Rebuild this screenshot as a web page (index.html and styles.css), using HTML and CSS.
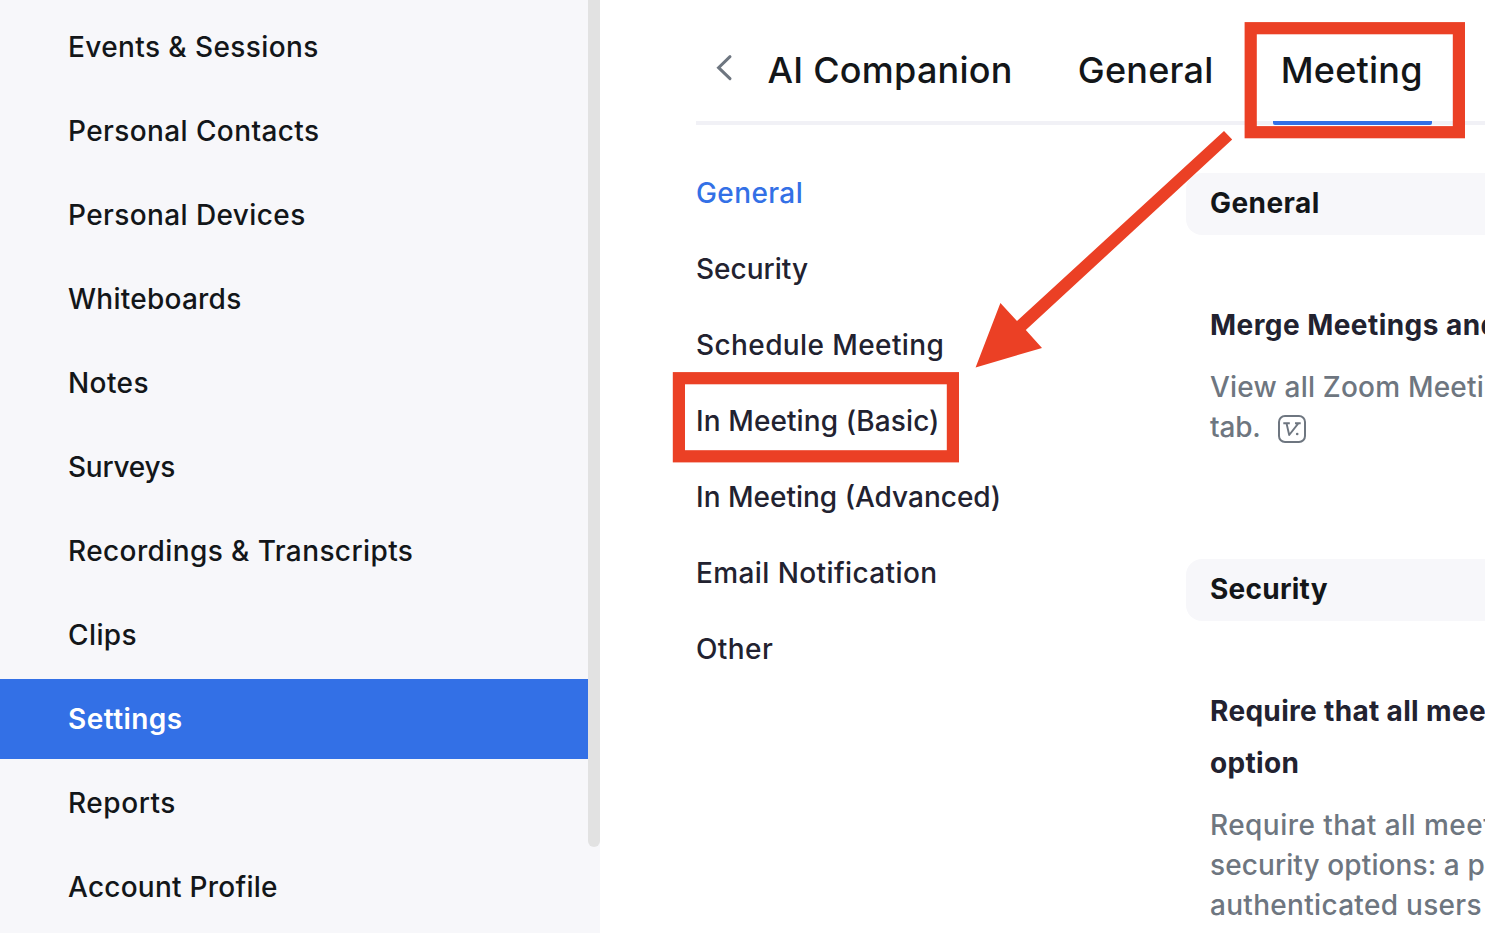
FILE: index.html
```html
<!DOCTYPE html>
<html lang="en">
<head>
<meta charset="utf-8">
<title>Settings</title>
<link rel="stylesheet" href="styles.css">
</head>
<body>
<div class="app">
  <aside class="sidebar">
    <nav class="menu">
      <a class="item">Events &amp; Sessions</a>
      <a class="item">Personal Contacts</a>
      <a class="item">Personal Devices</a>
      <a class="item snug">Whiteboards</a>
      <a class="item">Notes</a>
      <a class="item tight">Surveys</a>
      <a class="item">Recordings &amp; Transcripts</a>
      <a class="item">Clips</a>
      <a class="item active">Settings</a>
      <a class="item loose">Reports</a>
      <a class="item snug">Account Profile</a>
    </nav>
    <div class="scrollbar"></div>
  </aside>
  <main class="main">
    <header class="tabs">
      <svg class="back" width="20" height="28" viewBox="0 0 20 28"><path d="M17 2.7 5.6 13.7 17 24.7" fill="none" stroke="#6e7680" stroke-width="3" stroke-linecap="round"/></svg>
      <a class="tab">AI Companion</a>
      <a class="tab second">General</a>
      <a class="tab current">Meeting</a>
    </header>
    <div class="body">
      <nav class="subnav">
        <a class="sub selected">General</a>
        <a class="sub tight">Security</a>
        <a class="sub">Schedule Meeting</a>
        <a class="sub snug">In Meeting (Basic)</a>
        <a class="sub tight">In Meeting (Advanced)</a>
        <a class="sub">Email Notification</a>
        <a class="sub">Other</a>
      </nav>
      <div class="content">
        <section class="group">
          <h2 class="bar wide">General</h2>
          <h3 class="title wide">Merge Meetings and</h3>
          <p class="desc"><span class="snug">View all Zoom Meetings</span><br><span class="tight">tab.</span><svg class="badge" width="28" height="28" viewBox="0 0 28 28"><rect x="1" y="1" width="26" height="26" rx="6" fill="none" stroke="#6e7680" stroke-width="2"/><path d="M5.3 8.2H11.8M17 8.2H22.7M8.5 8.2 11.2 20 20.5 8.2" fill="none" stroke="#6e7680" stroke-width="1.9" stroke-linejoin="round"/><circle cx="19.2" cy="19" r="1.3" fill="#6e7680"/></svg></p>
        </section>
        <section class="group">
          <h2 class="bar">Security</h2>
          <h3 class="title">Require that all meetings<br>option</h3>
          <p class="desc">Require that all meetings<br><span class="narrow">security options: a passcode</span><br><span class="even">authenticated users</span></p>
        </section>
      </div>
    </div>
  </main>
  <svg class="annotations" width="1485" height="933" viewBox="0 0 1485 933">
    <g fill="none" stroke="#eb4025" stroke-width="12.2">
      <rect x="1250.7" y="28.2" width="208.2" height="104"/>
      <rect x="678.9" y="378.2" width="274" height="78.1"/>
    </g>
    <path d="M975.6 367.4 1000.4 303 1017 321 1224 131 1232.2 139.6 1025.8 330 1042 348Z" fill="#eb4025"/>
  </svg>
</div>
</body>
</html>
```
FILE: styles.css
```css
* { box-sizing: border-box; }
body {
  margin: 0;
  overflow: hidden;
  background: #fff;
  color: #131619;
  font-family: Inter, "Liberation Sans", sans-serif;
  font-size: 28px;
}
.app { position: relative; display: flex; width: 1485px; height: 933px; overflow: hidden; }
.sidebar { display: flex; flex: 0 0 600px; height: 933px; overflow: hidden; background: #f7f7fa; }
.menu { display: flex; flex: 1; flex-direction: column; gap: 4px; padding-top: 7px; }
.item {
  flex: 0 0 80px;
  padding-left: 68px;
  line-height: 80px;
  font-weight: 540;
  letter-spacing: 0.4px;
  white-space: nowrap;
}
.item.snug { letter-spacing: 0.25px; }
.item.tight { letter-spacing: -0.25px; }
.item.loose { letter-spacing: 0.55px; }
.item.active { background: #3370e6; color: #fff; font-weight: 600; letter-spacing: 0.45px; }
.scrollbar { width: 12px; height: 847px; border-radius: 0 0 6px 6px; background: #e2e2e2; }
.main { flex: 1; min-width: 0; padding-left: 96px; overflow: hidden; }
.tabs {
  display: flex;
  height: 125px;
  padding-left: 17px;
  border-bottom: 4px solid #f1f1f6;
  font-size: 36px;
  font-weight: 500;
  letter-spacing: 0.25px;
}
.back { flex: none; margin: 54px 26.5px 0 0; }
.tab {
  height: 125px;
  margin-right: 49px;
  padding: 0 8px;
  line-height: 140px;
  white-space: nowrap;
}
.tab.second { margin-right: 51px; }
.tab.current { padding-right: 9px; background: linear-gradient(#3370e6, #3370e6) bottom / 100% 4px no-repeat; border-radius: 0 0 2px 2px; }
.body { display: flex; }
.subnav { display: flex; flex: 0 0 490px; flex-direction: column; padding-top: 30px; color: #222230; }
.sub { height: 76px; line-height: 76px; font-weight: 450; letter-spacing: 0.4px; white-space: nowrap; }
.sub.snug { letter-spacing: 0.1px; }
.sub.tight { letter-spacing: 0; }
.sub.selected { color: #3370e6; }
.content { flex: 1; min-width: 0; padding-top: 48px; overflow: hidden; white-space: nowrap; }
.group { margin-bottom: 112px; }
.bar {
  height: 62px;
  margin: 0;
  padding-left: 24px;
  border-radius: 16px 0 0 16px;
  background: #f7f7fa;
  font-size: 28px;
  font-weight: 650;
  line-height: 60px;
  letter-spacing: 0.25px;
}
.title {
  margin: 64px 0 16px;
  padding-left: 24px;
  color: #222230;
  font-size: 28px;
  font-weight: 650;
  line-height: 52px;
  letter-spacing: 0.33px;
}
.wide { letter-spacing: 0.45px; }
.desc { margin: 0; padding-left: 24px; color: #6e7680; font-weight: 450; line-height: 40px; letter-spacing: 0.45px; }
.desc .snug { letter-spacing: 0.2px; }
.desc .tight { letter-spacing: -0.2px; }
.desc .narrow { letter-spacing: 0.1px; }
.desc .even { letter-spacing: 0.3px; }
.badge { margin-left: 17px; vertical-align: -6px; }
.annotations { position: absolute; top: 0; left: 0; pointer-events: none; }
```
